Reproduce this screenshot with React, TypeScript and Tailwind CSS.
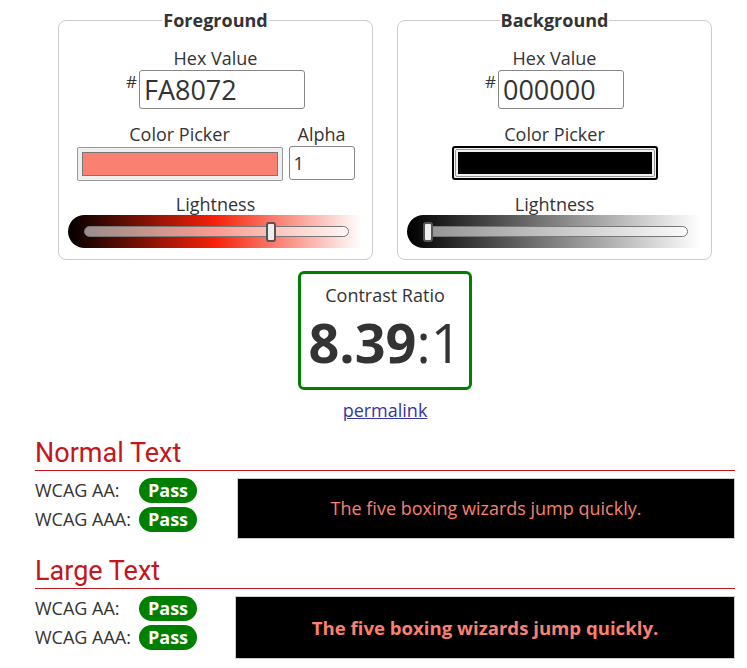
import React from "react";

const font = { fontFamily: '"Open Sans", "Liberation Sans", sans-serif' };

function Slider({ gradient, pos }: { gradient: string; pos: number }) {
  return (
    <div
      className="relative flex h-[33px] w-[293px] items-center rounded-l-full pl-[16px] pr-[12px]"
      style={{ background: gradient }}
    >
      <div className="relative h-[11px] w-full rounded-full border border-[#777] bg-[rgba(255,255,255,0.55)]">
        <div
          className="absolute top-1/2 h-[20px] w-[10px] -translate-x-1/2 -translate-y-1/2 rounded-[3px] border-2 border-[#555] bg-[#eee]"
          style={{ left: `${pos}%` }}
        />
      </div>
    </div>
  );
}

function ColorSwatch({ color, focused }: { color: string; focused?: boolean }) {
  if (focused) {
    return (
      <div className="h-[34px] w-[206px] rounded-[3px] border-2 border-black bg-[#efefef] p-[1px]">
        <div className="h-full w-full rounded-[2px] border border-[#999] bg-[#efefef] p-[2px]">
          <div className="h-full w-full" style={{ background: color }} />
        </div>
      </div>
    );
  }
  return (
    <div className="h-[34px] w-[206px] rounded-[2px] border border-[#999] bg-[#efefef] p-[4px]">
      <div className="h-full w-full border border-[#777]" style={{ background: color }} />
    </div>
  );
}

function HexRow({ value, width }: { value: string; width: string }) {
  return (
    <div className="flex items-start justify-center">
      <span className="mr-[2px] mt-[3px] text-[17px] leading-none text-[#333]">#</span>
      <div
        className={`${width} flex h-[39px] items-center rounded-[3px] border border-[#888] bg-white px-[4px] text-[27px] leading-none text-[#333]`}
      >
        {value}
      </div>
    </div>
  );
}

function Fieldset({ title, children }: { title: string; children: React.ReactNode }) {
  return (
    <fieldset className="w-[315px] rounded-[8px] border border-[#ccc] px-[9px] pb-[11px] pt-[16px]">
      <legend className="mx-auto px-[1px] text-[18px] font-bold leading-[20px] text-[#333]">
        {title}
      </legend>
      {children}
    </fieldset>
  );
}

function PassRow({ label }: { label: string }) {
  return (
    <div className="flex h-[29px] items-start">
      <span className="w-[104px] text-[18px] leading-[25px] text-[#333]">{label}</span>
      <span className="flex h-[25px] w-[58px] items-center justify-center rounded-full bg-[#008000] text-[18px] font-bold text-white">
        Pass
      </span>
    </div>
  );
}

function Section({
  title,
  bold,
  boxClass,
  colClass,
}: {
  title: string;
  bold?: boolean;
  boxClass: string;
  colClass: string;
}) {
  return (
    <div>
      <h2
        className="text-[27px] leading-[34px] text-[#c4161c]"
        style={{ fontFamily: 'Roboto, "Liberation Sans", sans-serif' }}
      >
        {title}
      </h2>
      <div className="h-px w-full bg-[#c4161c]" />
      <div className="flex items-start pt-[7px]">
        <div className={`${colClass} flex flex-col`}>
          <PassRow label="WCAG AA:" />
          <PassRow label="WCAG AAA:" />
        </div>
        <div
          className={`${boxClass} flex flex-1 items-center justify-center border border-[#ccc] bg-black text-[#FA8072] ${
            bold ? "text-[18.6px] font-bold" : "text-[18px]"
          }`}
        >
          The five boxing wizards jump quickly.
        </div>
      </div>
    </div>
  );
}

export default function App() {
  return (
    <div className="min-h-screen bg-white" style={font}>
      <div className="ml-[35px] w-[700px] pt-[10px]">
        <div className="flex justify-center gap-[24px]">
          <Fieldset title="Foreground">
            <div className="flex flex-col items-center">
              <div className="text-[18px] leading-[24px] text-[#333]">Hex Value</div>
              <HexRow value="FA8072" width="w-[166px]" />
              <div className="mt-[13px] flex items-end gap-[6px]">
                <div className="flex flex-col items-center">
                  <div className="mb-[1px] text-[18px] leading-[24px] text-[#333]">Color Picker</div>
                  <ColorSwatch color="#FA8072" />
                </div>
                <div className="flex flex-col items-center">
                  <div className="text-[18px] leading-[24px] text-[#333]">Alpha</div>
                  <div className="mb-[1px] flex h-[34px] w-[66px] items-center rounded-[3px] border border-[#888] px-[4px] text-[18px] text-[#333]">
                    1
                  </div>
                </div>
              </div>
              <div className="mt-[11px] text-[18px] leading-[24px] text-[#333]">Lightness</div>
              <div className="-mt-[1px] self-start">
                <Slider gradient="linear-gradient(to right, #000, hsl(6,93%,50%), #fff)" pos={70.8} />
              </div>
            </div>
          </Fieldset>
          <Fieldset title="Background">
            <div className="flex flex-col items-center">
              <div className="text-[18px] leading-[24px] text-[#333]">Hex Value</div>
              <HexRow value="000000" width="w-[126px]" />
              <div className="mt-[13px] flex flex-col items-center">
                <div className="text-[18px] leading-[24px] text-[#333]">Color Picker</div>
                <ColorSwatch color="#000" focused />
              </div>
              <div className="mt-[12px] text-[18px] leading-[24px] text-[#333]">Lightness</div>
              <div className="-mt-[1px] self-start">
                <Slider gradient="linear-gradient(to right, #000, #fff)" pos={1.5} />
              </div>
            </div>
          </Fieldset>
        </div>

        <div className="mt-[11px] flex flex-col items-center">
          <div className="flex h-[119px] w-[174px] flex-col items-center rounded-[6px] border-[3px] border-[#008000] pt-[9px]">
            <div className="text-[18px] leading-[24px] text-[#333]">Contrast Ratio</div>
            <div className="mt-[5px] text-[54px] leading-[60px] text-[#333]">
              <span className="font-bold">8.39</span>:1
            </div>
          </div>
          <a href="#" className="mt-[8px] text-[18px] leading-[24px] text-[#3535a6] underline">
            permalink
          </a>
        </div>

        <div className="mt-[14px]">
          <Section title="Normal Text" boxClass="h-[61px]" colClass="w-[202px]" />
        </div>
        <div className="mt-[15px]">
          <Section title="Large Text" bold boxClass="h-[63px]" colClass="w-[200px]" />
        </div>
      </div>
    </div>
  );
}
